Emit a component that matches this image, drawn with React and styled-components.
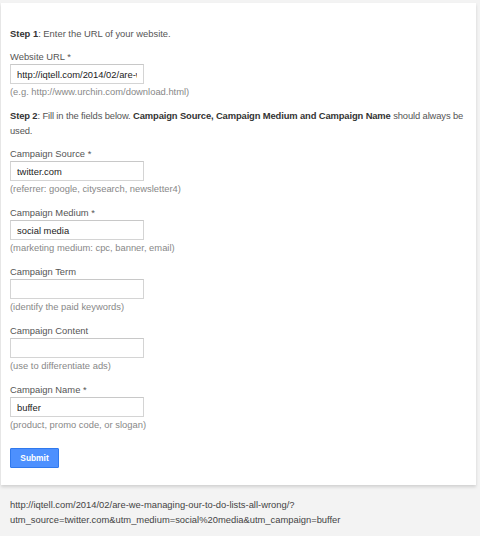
import React from "react";
import styled, { createGlobalStyle } from "styled-components";

const Global = createGlobalStyle`
  html, body { margin: 0; padding: 0; }
  body {
    background: #f3f3f3;
    font-family: "Liberation Sans", Arial, Helvetica, sans-serif;
    font-size: 9.4px;
    color: #555;
  }
`;

const Page = styled.div`
  width: 480px;
  height: 536px;
  padding: 3px 4px 0 1px;
  box-sizing: border-box;
  overflow: hidden;
`;

const Card = styled.form`
  background: #fff;
  padding: 23px 2px 17px 9px;
  box-shadow: 0 2px 3px rgba(0, 0, 0, 0.14);
  display: flex;
  flex-direction: column;
`;

const Para = styled.p`
  margin: 0 0 9px 0;
  line-height: 15px;
  color: #555;
  letter-spacing: ${(p) => p.$tight ? "-0.12px" : "normal"};
  b { color: #333; font-weight: bold; }
`;

const Field = styled.div`
  display: flex;
  flex-direction: column;
  margin-bottom: ${(p) => p.$gap || 10}px;
`;

const Label = styled.label`
  line-height: 14px;
  color: #555;
`;

const Input = styled.input`
  box-sizing: border-box;
  width: 134px;
  height: 20px;
  border: 1px solid #d4d4d4;
  border-top-color: #c8c8c8;
  padding: 0 6px;
  margin: 0;
  font-family: inherit;
  font-size: 9.4px;
  color: #222;
  background: #fff;
  outline: none;
`;

const Hint = styled.span`
  line-height: 15px;
  color: #888;
`;

const Submit = styled.button`
  align-self: flex-start;
  margin-top: 6px;
  width: 49px;
  height: 20px;
  border: 1px solid #3079ed;
  border-radius: 1px;
  background: #4d90fe;
  color: #fff;
  font-family: inherit;
  font-size: 8.4px;
  font-weight: bold;
  padding: 0;
`;

const Result = styled.div`
  margin-top: 12px;
  padding: 0 9px;
  line-height: 15px;
  color: #444;
`;

const fields = [
  { label: "Campaign Source *", value: "twitter.com", hint: "(referrer: google, citysearch, newsletter4)" },
  { label: "Campaign Medium *", value: "social media", hint: "(marketing medium: cpc, banner, email)" },
  { label: "Campaign Term", value: "", hint: "(identify the paid keywords)" },
  { label: "Campaign Content", value: "", hint: "(use to differentiate ads)" },
  { label: "Campaign Name *", value: "buffer", hint: "(product, promo code, or slogan)" },
];

export default function App() {
  return (
    <Page>
      <Global />
      <Card onSubmit={(e) => e.preventDefault()}>
        <Para>
          <b>Step 1</b>: Enter the URL of your website.
        </Para>
        <Field $gap={9}>
          <Label>Website URL *</Label>
          <Input defaultValue="http://iqtell.com/2014/02/are-we-managing-our-to-do-lists-all-wrong/" />
          <Hint>(e.g. http://www.urchin.com/download.html)</Hint>
        </Field>
        <Para $tight>
          <b>Step 2</b>: Fill in the fields below.{" "}
          <b>Campaign Source, Campaign Medium and Campaign Name</b> should always be used.
        </Para>
        {fields.map((f) => (
          <Field key={f.label}>
            <Label>{f.label}</Label>
            <Input defaultValue={f.value} />
            <Hint>{f.hint}</Hint>
          </Field>
        ))}
        <Submit type="submit">Submit</Submit>
      </Card>
      <Result>
        http://iqtell.com/2014/02/are-we-managing-our-to-do-lists-all-wrong/?
        <br />
        utm_source=twitter.com&amp;utm_medium=social%20media&amp;utm_campaign=buffer
      </Result>
    </Page>
  );
}
